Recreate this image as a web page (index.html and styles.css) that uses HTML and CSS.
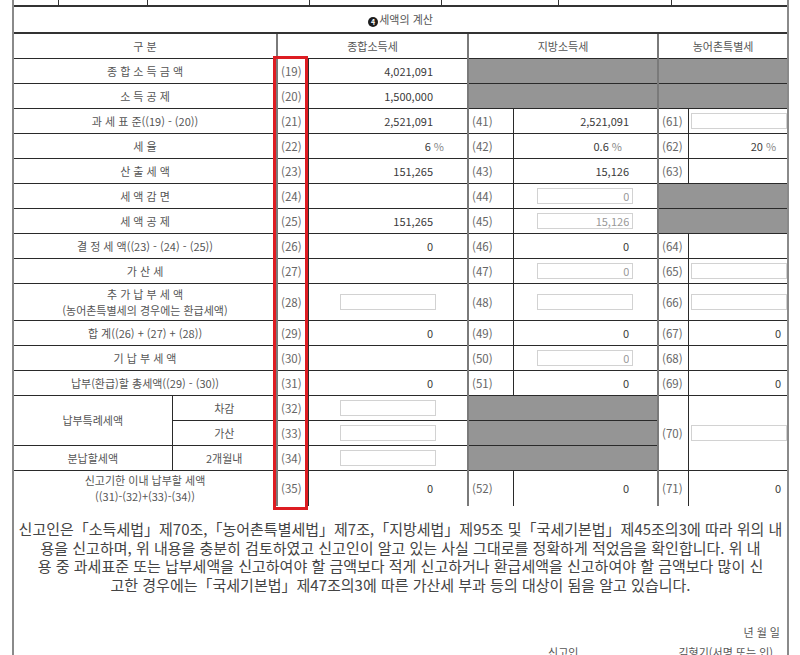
FILE: index.html
```html
<!DOCTYPE html>
<html lang="ko">
<head>
<meta charset="utf-8">
<title>세액의 계산</title>
<link rel="stylesheet" href="styles.css">
</head>
<body>
<div class="sheet">
  <div class="stub">
    <span></span><span></span><span></span><span></span><span></span><span></span><span></span>
  </div>
  <table class="calc">
    <colgroup>
      <col class="w1"><col class="w2"><col class="w3"><col class="w4"><col class="w5"><col class="w6"><col class="w7"><col class="w8">
    </colgroup>
    <tr class="title-row">
      <td colspan="8" class="title"><span class="badge">4</span>세액의 계산</td>
    </tr>
    <tr class="r">
      <td colspan="2" class="lbl">구 분</td>
      <td colspan="2" class="lbl gl">종합소득세</td>
      <td colspan="2" class="lbl gl">지방소득세</td>
      <td colspan="2" class="lbl gl">농어촌특별세</td>
    </tr>
    <tr class="r">
      <td colspan="2" class="lbl sp">종 합 소 득 금 액</td>
      <td class="no gl">(19)</td><td class="v4">4,021,091</td>
      <td colspan="2" class="gray gl"></td>
      <td colspan="2" class="gray gl"></td>
    </tr>
    <tr class="r">
      <td colspan="2" class="lbl sp">소 득 공 제</td>
      <td class="no gl">(20)</td><td class="v4">1,500,000</td>
      <td colspan="2" class="gray gl"></td>
      <td colspan="2" class="gray gl"></td>
    </tr>
    <tr class="r">
      <td colspan="2" class="lbl">과 세 표 준((19) - (20))</td>
      <td class="no gl">(21)</td><td class="v4">2,521,091</td>
      <td class="no gl">(41)</td><td class="v6">2,521,091</td>
      <td class="no gl">(61)</td><td class="i8"><input class="inp" type="text" value="" readonly></td>
    </tr>
    <tr class="r">
      <td colspan="2" class="lbl">세 율</td>
      <td class="no gl">(22)</td><td class="v4 pct4">6 <span class="pc">%</span></td>
      <td class="no gl">(42)</td><td class="v6 pct6">0.6 <span class="pc">%</span></td>
      <td class="no gl">(62)</td><td class="v8 pct8">20 <span class="pc">%</span></td>
    </tr>
    <tr class="r">
      <td colspan="2" class="lbl">산 출 세 액</td>
      <td class="no gl">(23)</td><td class="v4">151,265</td>
      <td class="no gl">(43)</td><td class="v6">15,126</td>
      <td class="no gl">(63)</td><td class="v8"></td>
    </tr>
    <tr class="r">
      <td colspan="2" class="lbl">세 액 감 면</td>
      <td class="no gl">(24)</td><td class="v4"></td>
      <td class="no gl">(44)</td><td class="i6"><input class="inp" type="text" value="0" readonly></td>
      <td colspan="2" class="gray gl"></td>
    </tr>
    <tr class="r">
      <td colspan="2" class="lbl">세 액 공 제</td>
      <td class="no gl">(25)</td><td class="v4">151,265</td>
      <td class="no gl">(45)</td><td class="i6"><input class="inp" type="text" value="15,126" readonly></td>
      <td colspan="2" class="gray gl"></td>
    </tr>
    <tr class="r">
      <td colspan="2" class="lbl">결 정 세 액((23) - (24) - (25))</td>
      <td class="no gl">(26)</td><td class="v4">0</td>
      <td class="no gl">(46)</td><td class="v6">0</td>
      <td class="no gl">(64)</td><td class="v8"></td>
    </tr>
    <tr class="r">
      <td colspan="2" class="lbl">가 산 세</td>
      <td class="no gl">(27)</td><td class="v4"></td>
      <td class="no gl">(47)</td><td class="i6"><input class="inp" type="text" value="0" readonly></td>
      <td class="no gl">(65)</td><td class="i8"><input class="inp" type="text" value="" readonly></td>
    </tr>
    <tr class="rt">
      <td colspan="2" class="lbl two">추 가 납 부 세 액<br>(농어촌특별세의 경우에는 환급세액)</td>
      <td class="no gl">(28)</td><td class="i4"><input class="inp" type="text" value="" readonly></td>
      <td class="no gl">(48)</td><td class="i6"><input class="inp" type="text" value="" readonly></td>
      <td class="no gl">(66)</td><td class="i8"><input class="inp" type="text" value="" readonly></td>
    </tr>
    <tr class="r">
      <td colspan="2" class="lbl">합 계((26) + (27) + (28))</td>
      <td class="no gl">(29)</td><td class="v4">0</td>
      <td class="no gl">(49)</td><td class="v6">0</td>
      <td class="no gl">(67)</td><td class="v8">0</td>
    </tr>
    <tr class="r">
      <td colspan="2" class="lbl">기 납 부 세 액</td>
      <td class="no gl">(30)</td><td class="v4"></td>
      <td class="no gl">(50)</td><td class="i6"><input class="inp" type="text" value="0" readonly></td>
      <td class="no gl">(68)</td><td class="v8"></td>
    </tr>
    <tr class="r">
      <td colspan="2" class="lbl">납부(환급)할 총세액((29) - (30))</td>
      <td class="no gl">(31)</td><td class="v4">0</td>
      <td class="no gl">(51)</td><td class="v6">0</td>
      <td class="no gl">(69)</td><td class="v8">0</td>
    </tr>
    <tr class="r">
      <td rowspan="2" class="lbl">납부특례세액</td>
      <td class="lbl">차감</td>
      <td class="no gl">(32)</td><td class="i4"><input class="inp" type="text" value="" readonly></td>
      <td colspan="2" class="gray gl"></td>
      <td rowspan="3" class="no gl">(70)</td>
      <td rowspan="3" class="i8"><input class="inp" type="text" value="" readonly></td>
    </tr>
    <tr class="r">
      <td class="lbl">가산</td>
      <td class="no gl">(33)</td><td class="i4"><input class="inp" type="text" value="" readonly></td>
      <td colspan="2" class="gray gl"></td>
    </tr>
    <tr class="r">
      <td class="lbl">분납할세액</td>
      <td class="lbl">2개월내</td>
      <td class="no gl">(34)</td><td class="i4"><input class="inp" type="text" value="" readonly></td>
      <td colspan="2" class="gray gl"></td>
    </tr>
    <tr class="rl">
      <td colspan="2" class="lbl two">신고기한 이내 납부할 세액<br>((31)-(32)+(33)-(34))</td>
      <td class="no gl">(35)</td><td class="v4">0</td>
      <td class="no gl">(52)</td><td class="v6">0</td>
      <td class="no gl">(71)</td><td class="v8">0</td>
    </tr>
  </table>
  <div class="red-box"></div>
  <div class="notice">
    <p class="pledge">신고인은「소득세법」제70조,「농어촌특별세법」제7조,「지방세법」제95조 및「국세기본법」제45조의3에 따라 위의 내<br>용을 신고하며, 위 내용을 충분히 검토하였고 신고인이 알고 있는 사실 그대로를 정확하게 적었음을 확인합니다. 위 내<br>용 중 과세표준 또는 납부세액을 신고하여야 할 금액보다 적게 신고하거나 환급세액을 신고하여야 할 금액보다 많이 신<br>고한 경우에는「국세기본법」제47조의3에 따른 가산세 부과 등의 대상이 됨을 알고 있습니다.</p>
    <p class="date">년 월 일</p>
    <div class="sign"><span>신고인</span><span>김형기(서명 또는 인)</span></div>
  </div>
</div>
</body>
</html>
```
FILE: styles.css
```css
* { box-sizing: border-box; }
html, body { margin: 0; padding: 0; background: #fff; }
body {
  font-family: "Noto Sans CJK KR", "Noto Sans", sans-serif;
  color: #444;
  overflow: hidden;
  height: 655px;
}
.sheet {
  position: relative;
  margin-left: 12px;
  width: 777px;
  border-left: 2px solid #8a8a8a;
  border-right: 2px solid #8a8a8a;
  min-height: 700px;
}
.stub {
  display: grid;
  grid-template-columns: 45px 89px 162px 132px 117px 113px 115px;
  height: 7px;
  border-bottom: 2px solid #333;
}
.stub span { border-right: 1px solid #333; }
.stub span:last-child { border-right: none; }

.calc {
  width: 773px;
  border-collapse: collapse;
  border-style: hidden;
  table-layout: fixed;
  font-size: 11px;
}
.w1 { width: 158px; } .w2 { width: 105px; } .w3 { width: 31px; } .w4 { width: 160px; }
.w5 { width: 45px; } .w6 { width: 145px; } .w7 { width: 30px; } .w8 { width: 99px; }

.calc td {
  border: 1px solid #2a2a2a;
  padding: 0;
  vertical-align: middle;
  line-height: 14px;
  white-space: nowrap;
}
.calc td.gl { border-left: 2px solid #7a7a7a; }
.calc td.two { line-height: 16px; }
.title-row td { height: 26px; border-bottom: 2px solid #333; }
.r td { height: 25px; }
.rt td { height: 37px; }
.rl td { height: 36px; }

.title { text-align: center; color: #555; }
.badge {
  display: inline-block;
  width: 10px; height: 10px;
  border-radius: 50%;
  background: #1e1e1e;
  color: #fff;
  font-size: 7px;
  line-height: 10px;
  text-align: center;
  font-weight: 700;
  vertical-align: -1px;
  margin-right: 1px;
}
.lbl { text-align: center; color: #555; }
.no { text-align: left; padding-left: 3px !important; color: #666; font-size: 11.5px; }
.v4, .v6, .v8 { text-align: right; color: #3a3a3a; }
.v4 { padding-right: 34px !important; }
.v6 { padding-right: 28px !important; }
.v8 { padding-right: 6px !important; }
.pct4 { padding-right: 23px !important; }
.pct6 { padding-right: 35px !important; }
.pct8 { padding-right: 11px !important; }
.pc { color: #888; }
.gray { background: #959595; }

.i4, .i6 { text-align: center; }
.i8 { text-align: left; padding-left: 2px !important; }
.inp {
  width: 96px;
  height: 16px;
  border: 1px solid #d2d2d2;
  background: #fff;
  font-family: "Noto Sans CJK KR", "Noto Sans", sans-serif;
  font-size: 11px;
  color: #999;
  text-align: right;
  padding: 0 3px;
  margin: 0;
  vertical-align: middle;
  outline: none;
}

.red-box {
  position: absolute;
  left: 259px;
  top: 56px;
  width: 35px;
  height: 454px;
  border: 3px solid #dd1c22;
}

.notice { padding-top: 14px; }
.pledge {
  margin: 0 -12px;
  text-align: center;
  white-space: nowrap;
  font-size: 15px;
  line-height: 18.7px;
  color: #444;
}
.date {
  margin: 30px 0 0;
  text-align: right;
  padding-right: 7px;
  font-size: 11px;
  line-height: 14px;
  color: #555;
}
.sign {
  display: flex;
  justify-content: flex-end;
  gap: 100px;
  padding-right: 14px;
  margin-top: 6px;
  font-size: 11px;
  line-height: 14px;
  color: #555;
}
```
